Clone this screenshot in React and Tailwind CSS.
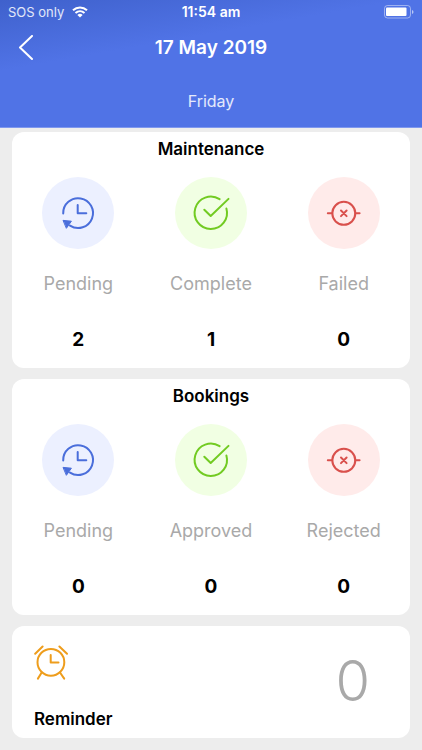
import React from "react";

function PendingIcon() {
  return (
    <svg viewBox="0 0 72 72" className="size-[72px]" fill="none" stroke="#4a6edb" strokeWidth="2" strokeLinecap="round" strokeLinejoin="round" aria-hidden="true">
      <path d="M21.2 36.5A14.9 14.9 0 1 1 28 48.6" />
      <path d="M35.7 28V36.3H44.3" />
      <path d="M21.4 43.4L29.4 44.2L24.6 51Z" fill="#4a6edb" strokeWidth="1" />
    </svg>
  );
}

function DoneIcon() {
  return (
    <svg viewBox="0 0 72 72" className="size-[72px]" fill="none" stroke="#72cb22" strokeWidth="2" strokeLinecap="round" strokeLinejoin="round" aria-hidden="true">
      <path d="M44.6 22.2A16.2 16.2 0 1 0 51.4 31.4" />
      <path d="M29.3 32.7L35.7 39L53.5 21.9" />
    </svg>
  );
}

function FailedIcon() {
  return (
    <svg viewBox="0 0 72 72" className="size-[72px]" fill="none" stroke="#d9504c" strokeWidth="2" strokeLinecap="round" aria-hidden="true">
      <circle cx="35.8" cy="36.3" r="11.5" />
      <path d="M19.8 36.3H24.3M47.3 36.3H51.6" />
      <path d="M33 33.5L38.6 39.1M38.6 33.5L33 39.1" />
    </svg>
  );
}

function AlarmIcon() {
  return (
    <svg viewBox="4 5 34 35" className="h-[35px] w-[34px]" fill="none" stroke="#ee9d1c" strokeWidth="2" strokeLinecap="round" strokeLinejoin="round" aria-hidden="true">
      <circle cx="20.9" cy="22.3" r="13.4" />
      <path d="M20.7 15V22.4H28.5" />
      <path d="M5.2 13.8L12.6 6.5M29.4 6.5L37 13.8" />
      <path d="M11.7 32.5L7.9 38.6M30 32.5L34.2 38.6" />
    </svg>
  );
}

function Stat({ icon, tint, label, value }) {
  return (
    <div className="flex flex-col items-center">
      <div className={`rounded-full ${tint}`}>{icon}</div>
      <dt className="mt-[23px] text-lg leading-6 text-[#a9a9a9]">{label}</dt>
      <dd className="mt-8 text-[19px] leading-6 font-bold">{value}</dd>
    </div>
  );
}

function StatCard({ title, labels, values }) {
  return (
    <section className="rounded-xl bg-white pt-1 pb-4">
      <h2 className="text-center text-[17px] leading-[26px] font-semibold">{title}</h2>
      <dl className="mt-[15px] grid grid-cols-3">
        <Stat icon={<PendingIcon />} tint="bg-[#ecf0ff]" label={labels[0]} value={values[0]} />
        <Stat icon={<DoneIcon />} tint="bg-[#f1ffe3]" label={labels[1]} value={values[1]} />
        <Stat icon={<FailedIcon />} tint="bg-[#ffebea]" label={labels[2]} value={values[2]} />
      </dl>
    </section>
  );
}

function StatusBar() {
  return (
    <div className="grid h-6 grid-cols-3 items-center px-2 text-[13px] leading-6">
      <div className="flex items-center gap-2">
        <span className="text-white/85">SOS only</span>
        <svg viewBox="0 0 16 12" className="h-3 w-4" fill="none" stroke="white" strokeWidth="2" aria-label="Wi-Fi">
          <path d="M1 4.3C5 .5 11 .5 15 4.3M3.5 7C6.2 4.5 9.8 4.5 12.5 7" />
          <path d="M5.4 8.9Q8 6.8 10.6 8.9L8 11.6Z" fill="white" stroke="none" />
        </svg>
      </div>
      <span className="text-center text-sm font-semibold">11:54 am</span>
      <svg viewBox="0 0 30 14" className="h-3.5 w-[30px] justify-self-end" aria-label="Battery">
        <rect x="0.5" y="0.5" width="26" height="12.5" rx="3" fill="none" stroke="white" strokeOpacity=".45" />
        <rect x="2" y="2.5" width="20.5" height="8.5" rx="1" fill="white" />
        <path d="M28 5Q29.5 5.5 29.5 7T28 9Z" fill="white" fillOpacity=".6" />
      </svg>
    </div>
  );
}

export default function App() {
  return (
    <div className="min-h-screen bg-[#ededed] font-['Inter','Liberation_Sans',sans-serif] text-black">
      <header className="border-b border-[#7f98ee] bg-[#5073e6] bg-[linear-gradient(170deg,#3f61cc_0px,#5073e6_70px)] pb-3.5 text-white">
        <StatusBar />
        <div className="grid grid-cols-[40px_1fr_40px] items-center pt-1">
          <button type="button" aria-label="Back" className="flex h-10 items-center pl-[18px]">
            <svg viewBox="0 0 16 26" className="h-[26px] w-4" fill="none" stroke="white" strokeWidth="2" strokeLinecap="round" strokeLinejoin="round">
              <path d="M14 1L2 12.5L14 24" />
            </svg>
          </button>
          <h1 className="text-center text-[19px] leading-10 font-semibold">17 May 2019</h1>
        </div>
        <p className="mt-[21px] text-center text-base leading-6 text-white/85">Friday</p>
      </header>
      <main className="flex flex-col gap-[11px] px-3 pt-1 pb-3">
        <StatCard title="Maintenance" labels={["Pending", "Complete", "Failed"]} values={[2, 1, 0]} />
        <StatCard title="Bookings" labels={["Pending", "Approved", "Rejected"]} values={[0, 0, 0]} />
        <section className="flex items-start justify-between rounded-xl bg-white pt-[19px] pr-10 pb-[7px] pl-[22px]">
          <div>
            <AlarmIcon />
            <h2 className="mt-[27px] text-[17px] leading-6 font-semibold">Reminder</h2>
          </div>
          <span className="mt-1 text-[56px] leading-[64px] font-light text-[#a9a9a9]">0</span>
        </section>
      </main>
    </div>
  );
}
